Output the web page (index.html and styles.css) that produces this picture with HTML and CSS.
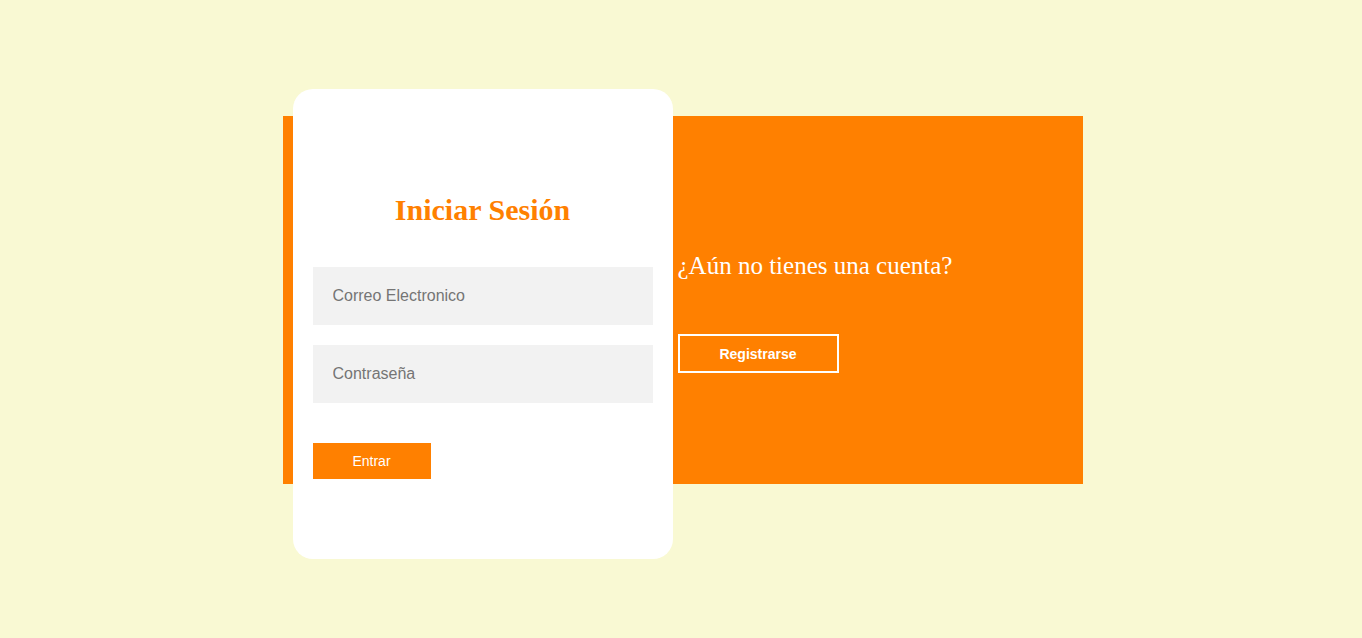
FILE: index.html
```html
<!DOCTYPE html>
<html lang="es">
<head>
<meta charset="utf-8">
<title>Iniciar Sesión</title>
<link rel="stylesheet" href="styles.css">
</head>
<body>
<main class="page">
  <section class="panel">
    <form class="card">
      <h2 class="card-title">Iniciar Sesión</h2>
      <input class="field" type="email" placeholder="Correo Electronico">
      <input class="field" type="password" placeholder="Contraseña">
      <button class="btn-enter" type="button">Entrar</button>
    </form>
    <div class="aside">
      <h3 class="aside-title">¿Aún no tienes una cuenta?</h3>
      <button class="btn-register" type="button">Registrarse</button>
    </div>
  </section>
</main>
</body>
</html>
```
FILE: styles.css
```css
* { box-sizing: border-box; }
html, body { margin: 0; padding: 0; }
body {
  background: #f9f9d3;
  font-family: "Liberation Serif", "Times New Roman", serif;
  width: 1362px;
  height: 638px;
  overflow: hidden;
}
.page {
  display: flex;
  justify-content: center;
  padding-top: 116px;
  padding-left: 3px;
}
.panel {
  width: 800px;
  height: 368px;
  background: #ff8000;
  display: flex;
  align-items: flex-start;
}
.card {
  width: 380px;
  height: 470px;
  margin-left: 10px;
  margin-top: -27px;
  background: #fff;
  border-radius: 20px;
  padding: 105px 20px 0;
  display: flex;
  flex-direction: column;
  align-items: flex-start;
}
.card-title {
  margin: 0 0 41px;
  width: 100%;
  text-align: center;
  font-size: 30px;
  line-height: 32px;
  font-weight: bold;
  color: #ff8000;
}
.field {
  width: 340px;
  height: 58px;
  border: none;
  background: #f2f2f2;
  padding: 0 20px;
  margin: 0 0 20px;
  font-family: "Liberation Sans", Arial, sans-serif;
  font-size: 16px;
  color: #333;
  outline: none;
}
.field::placeholder { color: #757575; }
.btn-enter {
  margin-top: 20px;
  width: 118px;
  height: 36px;
  border: none;
  background: #ff8000;
  color: #fff;
  font-family: "Liberation Sans", Arial, sans-serif;
  font-size: 14px;
  padding: 0;
}
.aside {
  padding: 136px 0 0 5px;
  display: flex;
  flex-direction: column;
  align-items: flex-start;
}
.aside-title {
  margin: 0 0 54px;
  font-size: 25px;
  line-height: 28px;
  font-weight: normal;
  color: #fff;
}
.btn-register {
  width: 161px;
  height: 39px;
  border: 2px solid #fff;
  background: transparent;
  color: #fff;
  font-family: "Liberation Sans", Arial, sans-serif;
  font-size: 14px;
  font-weight: bold;
  padding: 0;
}
```
